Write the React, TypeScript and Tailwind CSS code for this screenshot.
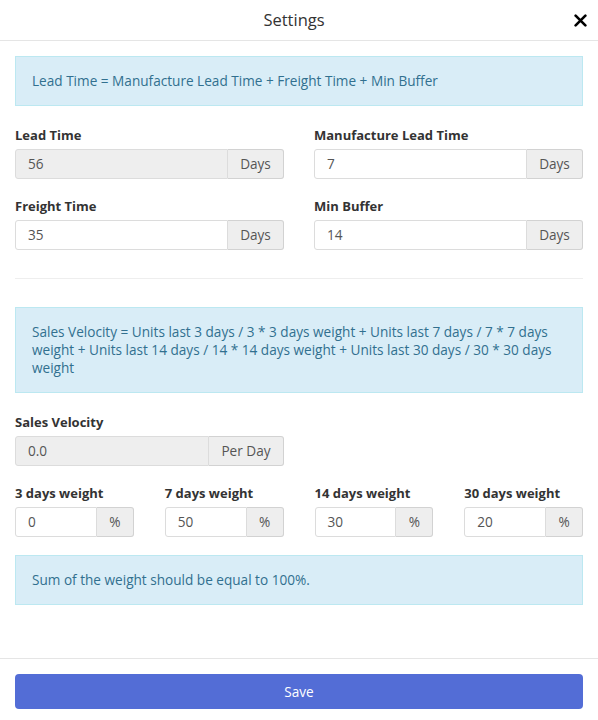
function InputGroup({ value, addon, disabled, addonW }: { value: string; addon: string; disabled?: boolean; addonW: string }) {
    return (
        <div className="flex h-[30px] w-full">
            <div
                className={`flex flex-1 min-w-0 items-center rounded-l-[3px] border border-[#dcdcdc] px-3 text-[13.6px] text-[#555] ${disabled ? 'bg-[#eeeeee]' : 'bg-white'}`}
            >
                {value}
            </div>
            <div className={`${addonW} flex items-center justify-center rounded-r-[3px] border border-l-0 border-[#d2d2d2] bg-[#eeeeee] text-[13.6px] text-[#555]`}>
                {addon}
            </div>
        </div>
    );
}

function Field({ label, value, addon, disabled, addonW = 'w-[56px]' }: { label: string; value: string; addon: string; disabled?: boolean; addonW?: string }) {
    return (
        <div className="flex flex-col">
            <label className="mb-[4px] text-[13px] font-bold leading-[20px] text-[#333]">{label}</label>
            <InputGroup value={value} addon={addon} disabled={disabled} addonW={addonW} />
        </div>
    );
}

function Alert({ children, className = '' }: { children: React.ReactNode; className?: string }) {
    return (
        <div className={`border border-[#bce8f1] bg-[#d9edf7] px-4 text-[13.6px] leading-[18px] text-[#31708f] ${className}`}>{children}</div>
    );
}

export default function App() {
    return (
        <div className="flex h-[720px] w-[598px] flex-col bg-white font-['Open_Sans',sans-serif] text-[#333]">
            <div className="relative flex h-[41px] items-center justify-center border-b border-[#e5e5e5] pr-[10px]">
                <h4 className="text-[16.5px] text-[#333]">Settings</h4>
                <button className="absolute right-[10px] top-[11px] flex h-[18px] w-[16px] items-center justify-center">
                    <svg viewBox="0 0 16 16" className="h-[13px] w-[13px]">
                        <path d="M2 2 L14 14 M14 2 L2 14" stroke="#000" strokeWidth="3.2" strokeLinecap="round" />
                    </svg>
                </button>
            </div>

            <div className="flex-1 px-[15px] pt-[15px]">
                <Alert className="py-[15px]">Lead Time = Manufacture Lead Time + Freight Time + Min Buffer</Alert>

                <div className="mt-[19px] grid grid-cols-2 gap-x-[30px] gap-y-[17px]">
                    <Field label="Lead Time" value="56" addon="Days" disabled />
                    <Field label="Manufacture Lead Time" value="7" addon="Days" />
                    <Field label="Freight Time" value="35" addon="Days" />
                    <Field label="Min Buffer" value="14" addon="Days" />
                </div>

                <hr className="mt-[28px] border-t border-[#eeeeee]" />

                <Alert className="mt-[28px] py-[15px]">
                    Sales Velocity = Units last 3 days / 3 * 3 days weight + Units last 7 days / 7 * 7 days weight + Units last 14 days / 14 * 14 days weight + Units last 30 days / 30 * 30 days weight
                </Alert>

                <div className="mt-[19px] grid grid-cols-2 gap-x-[30px]">
                    <Field label="Sales Velocity" value="0.0" addon="Per Day" disabled addonW="w-[75px]" />
                </div>

                <div className="mt-[17px] grid grid-cols-4 gap-x-[31px]">
                    <Field label="3 days weight" value="0" addon="%" addonW="w-[37px]" />
                    <Field label="7 days weight" value="50" addon="%" addonW="w-[37px]" />
                    <Field label="14 days weight" value="30" addon="%" addonW="w-[37px]" />
                    <Field label="30 days weight" value="20" addon="%" addonW="w-[37px]" />
                </div>

                <Alert className="mt-[18px] py-[15px]">Sum of the weight should be equal to 100%.</Alert>
            </div>

            <div className="border-t border-[#e5e5e5] px-[15px] pb-[11px] pt-[15px]">
                <button className="h-[35px] w-full rounded-[4px] bg-[#536dd6] pt-[2px] text-[13.6px] text-white">Save</button>
            </div>
        </div>
    );
}
